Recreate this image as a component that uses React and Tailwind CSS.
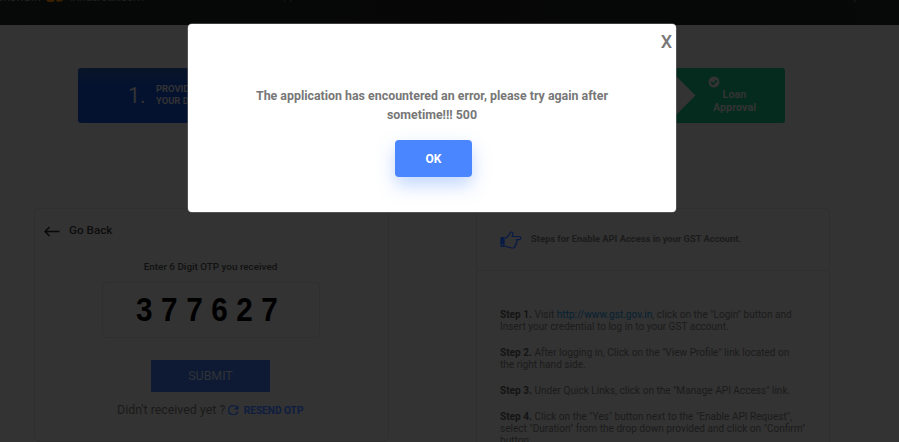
import React from "react";

function Header() {
  return (
    <header className="h-[25px] overflow-hidden bg-[#060707] bg-linear-to-r from-[#060908] via-[#060606] to-[#060908]">
      <div className="flex items-start -mt-[11px] h-[16px] text-[14px] leading-[16px] whitespace-nowrap">
        <div className="w-[44px] flex justify-end pr-[3px]">
          <span className="text-[13px] leading-[15px] text-[#1f2221]">Blockchain</span>
        </div>
        <svg className="w-[22px] h-[15px]" viewBox="0 0 22 15">
          <path d="M1.5 6 h9.5 v5 q-1 2.2 -4 2.2 q-5 0 -5.5 -4 z" fill="#3a2200" />
          <path d="M12.5 12.5 q8 1.5 9 -6.500 h-9 z" fill="#3a2200" />
        </svg>
        <span className="ml-[4px] w-[206px] text-[#1c1e1e] text-[13px] leading-[15px] tracking-[-1px]">
          Infracredit.com
        </span>
        <span className="w-[578px] text-[11px] leading-[15px] text-[#1c1c1c]">App</span>
        <span className="text-[11px] leading-[16px] text-[#1c1c1c]">j</span>
      </div>
    </header>
  );
}

function Steps() {
  return (
    <div className="ml-[78px] mt-[43px] w-[707px] h-[55px] flex rounded-[3px] overflow-hidden">
      <div className="w-[354px] bg-linear-to-b from-[#091527] to-[#04122f] to-30% flex items-center pl-[50px] text-[#333333]">
        <span className="text-[21.5px] leading-none w-[28px]">1.</span>
        <div className="mt-[-1px] text-[9.4px] leading-[12px] font-bold whitespace-nowrap">
          PROVIDE
          <br />
          YOUR DETAILS
        </div>
      </div>
      <div className="flex-1 bg-[#052b1f] flex">
        <svg className="ml-[234px] w-[30px] h-[55px]" viewBox="0 0 30 55">
          <path d="M0 -2 L29.5 27.5 L0 57 Z" fill="#333333" />
        </svg>
        <div className="w-[77px] pt-[7.5px] text-[#333333]">
          <svg className="ml-[12px] w-[12px] h-[12px]" viewBox="0 0 12 12">
            <circle cx="6" cy="6" r="5.5" fill="#333333" />
            <path d="M3.2 6.2 L5.2 8.1 L8.8 4.4" fill="none" stroke="#052b1f" strokeWidth="1.6" />
          </svg>
          <div className="mt-[1.5px] text-[10.8px] leading-[12.5px] font-bold text-center">
            Loan
            <br />
            Approval
          </div>
        </div>
      </div>
    </div>
  );
}

function OtpCard() {
  return (
    <section className="w-[355px] h-[234px] rounded-[5px] border border-[#2f2f2f]">
      <div className="flex items-center mt-[13px] ml-[9px] h-[18px] text-[11.7px] font-medium text-[#0d0d0d]">
        <svg className="w-[16px] h-[12px] mr-[9px]" viewBox="0 0 16 12">
          <path d="M15.5 6.5 H1 M5.5 2 L1 6.5 L5.5 11" fill="none" stroke="#080808" strokeWidth="1.4" />
        </svg>
        Go Back
      </div>
      <p className="mt-[19px] text-center text-[9.9px] leading-[16px] font-medium text-[#111111] pr-[2px]">
        Enter 6 Digit OTP you received
      </p>
      <div className="mt-[7px] ml-[67px] w-[218px] h-[56px] rounded-[4px] border border-[#2f2f2f] flex items-center pl-[33px]">
        <span className="inline-block origin-left scale-x-[0.9] -mt-[2px] text-[33px] leading-none font-bold tracking-[9.5px] text-black font-['Liberation_Sans',sans-serif]">
          377627
        </span>
      </div>
      <button className="block mt-[22px] ml-[116px] w-[119px] h-[32px] rounded-[1px] bg-[#0e1a33] text-[12.4px] text-[#303338]">
        SUBMIT
      </button>
      <div className="mt-[10px] ml-[82px] flex items-center h-[16px] whitespace-nowrap">
        <span className="text-[12.4px] text-[#1a1a1a]">Didn't received yet ?</span>
        <svg className="ml-[3px] w-[10.5px] h-[10.5px]" viewBox="4 4 16 16">
          <path
            d="M17.65 6.35A7.96 7.96 0 0 0 12 4a8 8 0 1 0 7.73 10h-2.08A6 6 0 1 1 12 6c1.66 0 3.14.69 4.22 1.78L13 11h7V4l-2.35 2.35z"
            fill="#0e1d40"
          />
        </svg>
        <span className="ml-[5px] mt-[1px] text-[10.1px] font-bold text-[#0e1d40]">RESEND OTP</span>
      </div>
    </section>
  );
}

function Step({ n, children }) {
  return (
    <p>
      <b className="font-bold text-[#141414]">Step {n}.</b> {children}
    </p>
  );
}

function GuideCard() {
  return (
    <section className="w-[354px] h-[260px] rounded-[5px] border border-[#2f2f2f]">
      <div className="h-[62px] flex items-center pl-[23px] border-b border-[#2f2f2f]">
        <svg className="w-[22px] h-[18px] mr-[9px]" viewBox="0 0 22 18">
          <path
            fillRule="evenodd"
            d="M1.4 6 H4.6 V16 H1.4 Q.4 16 .4 15 V7 Q.4 6 1.4 6 Z M2.4 13 a.8 .8 0 1 0 .1 0 Z"
            fill="#081a45"
          />
          <path
            d="M5 7 C7.5 7 8.5 4.5 10 2 C11 .4 13.2 1.2 12.8 3.3 L12.2 5.5 H19 C21.4 5.5 21.4 8.6 19 8.6 H16.2 C17.6 9.2 17.2 11.2 16 11.5 C16.8 12.6 16.2 14 15 14.2 C15.4 16 14.4 17 12.6 17 C9.5 17 8 15.6 5 15.4"
            fill="none"
            stroke="#081a45"
            strokeWidth="1.2"
            strokeLinejoin="round"
          />
        </svg>
        <h2 className="-mt-px text-[9.35px] font-bold text-[#1b1b1b] whitespace-nowrap">
          Steps for Enable API Access in your GST Account.
        </h2>
      </div>
      <div className="pt-[38px] pl-[23px] flex flex-col gap-[14px] text-[10.08px] leading-[12px] text-[#1b1b1b] whitespace-nowrap">
        <Step n="1">
          Visit <a className="text-[#062032]">http://www.gst.gov.in</a>, click on the "Login" button and
          <br />
          Insert your credential to log in to your GST account.
        </Step>
        <Step n="2">
          After logging in, Click on the "View Profile" link located on
          <br />
          the right hand side.
        </Step>
        <Step n="3">Under Quick Links, click on the "Manage API Access" link.</Step>
        <Step n="4">
          Click on the "Yes" button next to the "Enable API Request",
          <br />
          select "Duration" from the drop down provided and click on "Confirm"
          <br />
          button.
        </Step>
      </div>
    </section>
  );
}

function ErrorDialog() {
  return (
    <div
      role="dialog"
      className="absolute left-[188px] top-[24px] w-[488px] h-[188px] rounded-[4px] bg-white shadow-[0_0_0_0.5px_#777] text-[#777777]"
    >
      <div className="flex justify-end pr-[4px] pt-[7px]">
        <button className="text-[18px] leading-[22px] font-medium">X</button>
      </div>
      <div className="flex flex-col items-center pt-[33px]">
        <p className="text-center text-[12.4px] leading-[19px] font-bold whitespace-nowrap">
          The application has encountered an error, please try again after
          <br />
          sometime!!! 500
        </p>
        <button className="mt-[16px] ml-[3px] w-[77px] h-[37px] rounded-[4px] bg-[#4a86ff] text-white text-[12px] font-bold shadow-[0_8px_18px_rgba(74,134,255,0.34)]">
          OK
        </button>
      </div>
    </div>
  );
}

export default function App() {
  return (
    <div className="relative w-[899px] h-[442px] overflow-hidden bg-[#333333] font-[Roboto,sans-serif]">
      <Header />
      <Steps />
      <main className="mt-[85px] ml-[34px] flex items-start gap-[87px]">
        <OtpCard />
        <GuideCard />
      </main>
      <ErrorDialog />
    </div>
  );
}
